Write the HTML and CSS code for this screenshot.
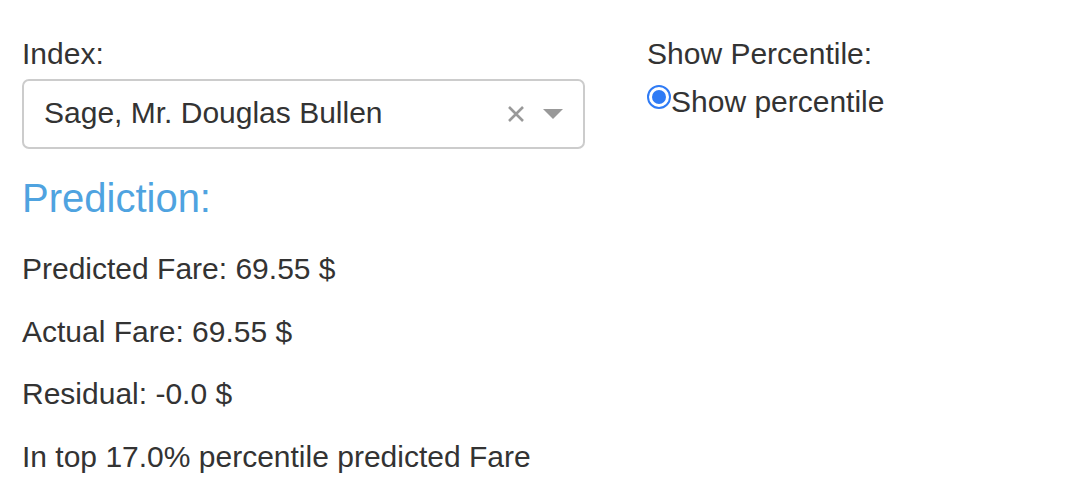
FILE: index.html
```html
<!DOCTYPE html>
<html>
<head>
<meta charset="utf-8">
<link rel="stylesheet" href="styles.css">
</head>
<body>
<div class="page">
  <div class="col-left">
    <div class="label">Index:</div>
    <div class="select">
      <span class="select-value">Sage, Mr. Douglas Bullen</span>
      <span class="select-icons">
        <svg class="clear" width="18" height="18" viewBox="0 0 18 18"><path d="M2 2 L16 16 M16 2 L2 16" stroke="#999" stroke-width="2.6" stroke-linecap="butt" fill="none"/></svg>
        <svg class="arrow" width="20" height="11" viewBox="0 0 20 11"><path d="M0 0 L20 0 L10 10 Z" fill="#999"/></svg>
      </span>
    </div>
    <h3 class="heading">Prediction:</h3>
    <p class="line">Predicted Fare: 69.55 $</p>
    <p class="line">Actual Fare: 69.55 $</p>
    <p class="line">Residual: -0.0 $</p>
    <p class="line">In top 17.0% percentile predicted Fare</p>
  </div>
  <div class="col-right">
    <div class="label">Show Percentile:</div>
    <label class="radio-row">
      <span class="radio"><span class="radio-dot"></span></span>
      <span class="radio-text">Show percentile</span>
    </label>
  </div>
</div>
</body>
</html>
```
FILE: styles.css
```css
html, body {
  margin: 0;
  padding: 0;
  background: #fff;
}
body {
  font-family: "Liberation Sans", Arial, Helvetica, sans-serif;
  font-size: 30px;
  color: #333;
}
.page {
  display: grid;
  grid-template-columns: 563px 1fr;
  column-gap: 62px;
  padding: 34px 0 0 22px;
}
.label {
  line-height: 40px;
  height: 40px;
}
.select {
  margin-top: 5px;
  height: 66px;
  border: 2px solid #ccc;
  border-radius: 7px;
  display: flex;
  align-items: center;
  justify-content: space-between;
  padding: 0 20px 0 20px;
}
.select-value {
  line-height: 66px;
  margin-top: -2px;
}
.select-icons {
  display: flex;
  align-items: center;
  gap: 18px;
}
.clear {
  display: block;
}
.arrow {
  display: block;
  margin-top: 1px;
}
.heading {
  margin: 27px 0 28px;
  font-size: 40px;
  font-weight: normal;
  line-height: 44px;
  color: #4fa3e0;
}
.line {
  margin: 0 0 20px;
  line-height: 42.5px;
}
.radio-row {
  display: flex;
  align-items: flex-start;
  margin-top: 8px;
  line-height: 40px;
}
.radio {
  box-sizing: border-box;
  width: 24px;
  height: 24px;
  margin-top: 3px;
  border: 2.5px solid #2f7bf5;
  border-radius: 50%;
  display: flex;
  align-items: center;
  justify-content: center;
  background: #fff;
}
.radio-dot {
  width: 14px;
  height: 14px;
  border-radius: 50%;
  background: #2f7bf5;
}
.radio-text {
  margin-left: 0;
}
```
